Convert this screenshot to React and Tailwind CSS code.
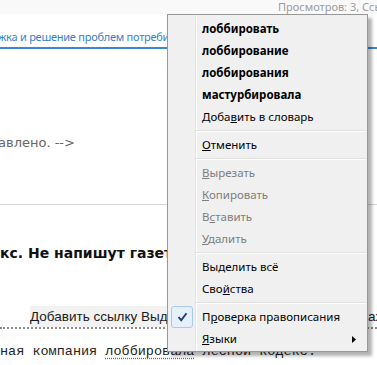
import React from "react";

function Sep() {
  return (
    <div className="flex h-[6px] flex-col justify-center pl-[28px] pr-[1px]">
      <div className="h-px bg-[#e0e0e0]" />
      <div className="h-px bg-white" />
    </div>
  );
}

function Item({ children, bold, disabled, checked, arrow }) {
  return (
    <div className="flex h-[22px] items-center text-[11.5px] leading-[16px]">
      <div className="flex w-[34px] shrink-0 pl-[3px]">
        {checked && (
          <div className="flex h-[22px] w-[22px] items-center justify-center rounded-[3px] border border-[#a9c8ec] bg-[#e6f0fb]">
            <svg width="11" height="10" viewBox="0 0 11 10">
              <polyline points="1.5,5 4.2,8.2 9.5,1.2" fill="none" stroke="#1c3f7c" strokeWidth="1.9" />
            </svg>
          </div>
        )}
      </div>
      <span
        className={
          "whitespace-nowrap " +
          (bold ? "font-bold " : "") +
          (disabled ? "text-[#7d7d7d]" : "text-black")
        }
      >
        {children}
      </span>
      {arrow && (
        <svg className="ml-auto mr-[11px]" width="4" height="7" viewBox="0 0 4 7">
          <polygon points="0,0 4,3.5 0,7" fill="#000" />
        </svg>
      )}
    </div>
  );
}

export default function App() {
  return (
    <div className="relative h-[365px] w-[377px] overflow-hidden bg-white font-['Noto_Sans',sans-serif]">
      <div className="h-[14px] overflow-hidden whitespace-nowrap bg-[#f9f9f9] pl-[278px] text-[11px] leading-[13px] text-[#9c9c9c]">
        Просмотров: 3, Ссылок: 0
      </div>

      <div className="overflow-hidden whitespace-nowrap border-b-2 border-[#3a87d2] pt-[15px] pb-[2px] font-['Noto_Sans',sans-serif] text-[11px] leading-[16px] tracking-[-0.25px] text-[#3b80c6]">
        <span className="-ml-[2px]">жка и решение проблем потребителей</span>
      </div>

      <div className="mt-[86px] overflow-hidden whitespace-nowrap font-['DejaVu_Sans',sans-serif] text-[13px] leading-[16px] text-[#666]">
        <span className="-ml-[2px]">авлено. --&gt;</span>
      </div>

      <div className="mt-[53px] border-t border-[#d4d4d4]" />

      <div className="mt-[39px] overflow-hidden whitespace-nowrap font-['DejaVu_Sans',sans-serif] text-[14px] font-bold leading-[18px] text-[#111]">
        кс. Не напишут газеты
      </div>

      <div className="mt-[44px] flex h-[21px] items-center overflow-hidden whitespace-nowrap pl-[30px] font-['Liberation_Sans',sans-serif] text-[13.5px] leading-[16px] text-[#1a1a1a]">
        <span className="flex h-full w-[338px] shrink-0 items-center bg-[#f2f2f2]">Добавить ссылку Выделить</span>
        <span>ах</span>
      </div>
      <div className="border-t-2 border-dotted border-[#8a8a8a]" />

      <div className="mt-[15px] overflow-hidden whitespace-nowrap font-['Liberation_Mono',monospace] text-[13.5px] leading-[16px] text-[#222]">
        ная компания{" "}
        <span className="underline decoration-[#b5542a] decoration-dotted underline-offset-[3px]">лоббировала</span>{" "}
        лесной кодекс.
      </div>

      <div className="absolute left-[167px] top-[14px] w-[201px] border border-[#979797] bg-[#f0f0f0] bg-[linear-gradient(to_right,#f0f0f0_27px,#e2e3e3_27px,#e2e3e3_28px,#ffffff_28px,#ffffff_29px,#f0f0f0_29px)] pt-[3px] pb-px shadow-[4px_4px_3px_rgba(0,0,0,0.3)]">
        <Item bold>лоббировать</Item>
        <Item bold>лоббирование</Item>
        <Item bold>лоббирования</Item>
        <Item bold>мастурбировала</Item>
        <Item>
          Доба<u>в</u>ить в словарь
        </Item>
        <Sep />
        <Item>
          <u>О</u>тменить
        </Item>
        <Sep />
        <Item disabled>
          <u>В</u>ырезать
        </Item>
        <Item disabled>
          <u>К</u>опировать
        </Item>
        <Item disabled>
          В<u>с</u>тавить
        </Item>
        <Item disabled>
          <u>У</u>далить
        </Item>
        <Sep />
        <Item>
          Вы<u>д</u>елить всё
        </Item>
        <Item>
          Сво<u>й</u>ства
        </Item>
        <Sep />
        <Item checked>
          П<u>р</u>оверка правописания
        </Item>
        <Item arrow>
          <u>Я</u>зыки
        </Item>
      </div>
    </div>
  );
}
